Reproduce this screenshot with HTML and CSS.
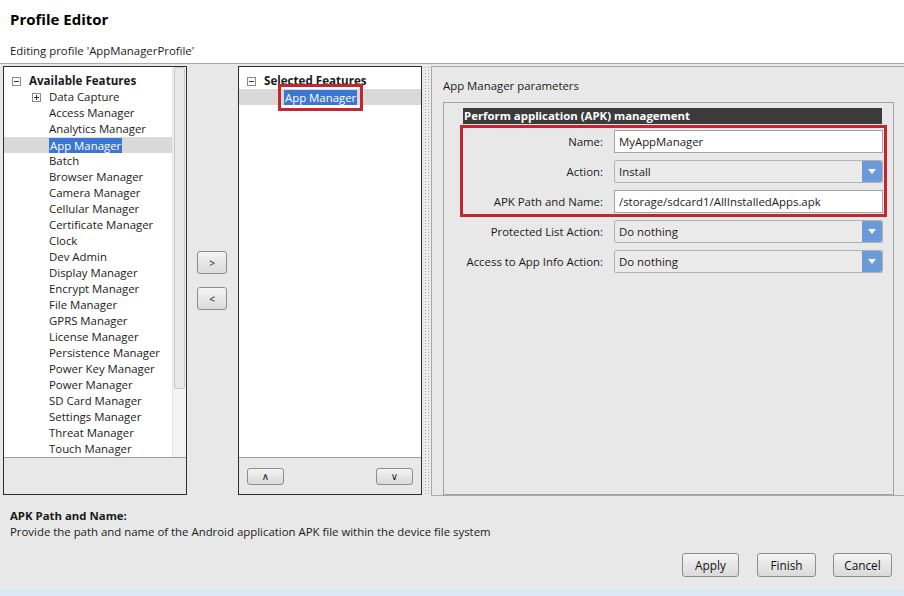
FILE: index.html
```html
<!DOCTYPE html>
<html>
<head>
<meta charset="utf-8">
<title>Profile Editor</title>
<link rel="stylesheet" href="styles.css">
</head>
<body>
<div class="window">
  <header class="header">
    <h1 class="title">Profile Editor</h1>
    <p class="subtitle">Editing profile 'AppManagerProfile'</p>
  </header>

  <div class="main">
    <div class="panel left-panel">
      <div class="tree-area">
        <ul class="tree">
          <li class="row root"><span class="tog minus"></span><b>Available Features</b></li>
          <li class="row l1"><span class="tog plus"></span>Data Capture</li>
          <li class="row l2">Access Manager</li>
          <li class="row l2">Analytics Manager</li>
          <li class="row l2 sel"><span class="hl">App Manager</span></li>
          <li class="row l2">Batch</li>
          <li class="row l2">Browser Manager</li>
          <li class="row l2">Camera Manager</li>
          <li class="row l2">Cellular Manager</li>
          <li class="row l2">Certificate Manager</li>
          <li class="row l2">Clock</li>
          <li class="row l2">Dev Admin</li>
          <li class="row l2">Display Manager</li>
          <li class="row l2">Encrypt Manager</li>
          <li class="row l2">File Manager</li>
          <li class="row l2">GPRS Manager</li>
          <li class="row l2">License Manager</li>
          <li class="row l2">Persistence Manager</li>
          <li class="row l2">Power Key Manager</li>
          <li class="row l2">Power Manager</li>
          <li class="row l2">SD Card Manager</li>
          <li class="row l2">Settings Manager</li>
          <li class="row l2">Threat Manager</li>
          <li class="row l2">Touch Manager</li>
        </ul>
        <div class="vscroll"><div class="thumb"></div></div>
      </div>
      <div class="panel-foot"></div>
    </div>

    <div class="mover">
      <button class="btn move-btn">&gt;</button>
      <button class="btn move-btn">&lt;</button>
    </div>

    <div class="panel mid-panel">
      <div class="tree-area">
        <ul class="tree">
          <li class="row root"><span class="tog minus"></span><b>Selected Features</b></li>
          <li class="row l2s sel"><span class="hl marked">App Manager</span></li>
        </ul>
      </div>
      <div class="panel-foot mid-foot">
        <button class="btn order-btn">&#8743;</button>
        <button class="btn order-btn">&#8744;</button>
      </div>
    </div>

    <div class="sash"><div class="sash-dots"></div></div>

    <div class="params">
      <div class="params-title">App Manager parameters</div>
      <div class="group">
        <div class="group-head">Perform application (APK) management</div>
        <div class="form">
          <div class="callout">
            <div class="frow"><span class="flabel">Name:</span><div class="field text">MyAppManager</div></div>
            <div class="frow"><span class="flabel">Action:</span><div class="field combo"><span>Install</span><span class="drop"></span></div></div>
            <div class="frow"><span class="flabel">APK Path and Name:</span><div class="field text">/storage/sdcard1/AllInstalledApps.apk</div></div>
          </div>
          <div class="frow"><span class="flabel">Protected List Action:</span><div class="field combo"><span>Do nothing</span><span class="drop"></span></div></div>
          <div class="frow"><span class="flabel">Access to App Info Action:</span><div class="field combo"><span>Do nothing</span><span class="drop"></span></div></div>
        </div>
      </div>
    </div>
  </div>

  <div class="footer">
    <div class="help">
      <div class="help-title">APK Path and Name:</div>
      <div class="help-text">Provide the path and name of the Android application APK file within the device file system</div>
    </div>
    <div class="actions">
      <button class="btn act apply">Apply</button>
      <button class="btn act">Finish</button>
      <button class="btn act">Cancel</button>
    </div>
  </div>
  <div class="taskstrip"></div>
</div>
</body>
</html>
```

FILE: styles.css
```css
* { box-sizing: border-box; }
html, body { margin: 0; padding: 0; }
body {
  width: 904px;
  height: 596px;
  overflow: hidden;
  background: #e8e8e8;
  font-family: "Open Sans", "Noto Sans", sans-serif;
  font-size: 11.4px;
  color: #1a1a1a;
}
.window { width: 904px; height: 596px; display: flex; flex-direction: column; overflow: hidden; }

.header {
  flex: none;
  background: #fff;
  height: 64px;
  border-bottom: 1px solid #a9a9a9;
  padding: 8px 10px 0;
}
.title { margin: 0; font-size: 15px; font-weight: 700; line-height: 22px; color: #000; }
.subtitle { margin: 13px 0 0; font-size: 11.4px; line-height: 16px; }

.main {
  flex: none;
  display: flex;
  height: 432px;
  padding: 2px 0 0 3px;
}
.main > * { flex: none; }
.panel {
  border: 1px solid #2e2e2e;
  background: #e8e8e8;
  display: flex;
  flex-direction: column;
  height: 429px;
}
.left-panel { width: 184px; }
.mid-panel { width: 184px; }
.tree-area {
  background: #fff;
  height: 391px;
  border-bottom: 1px solid #9c9c9c;
  display: flex;
}
.tree { list-style: none; margin: 0; padding: 6px 0 0; flex: 1; }
.row { height: 16px; line-height: 16px; white-space: nowrap; display: flex; align-items: center; }
.row b { font-weight: 700; font-size: 11.6px; }
.root { padding-left: 8px; }
.l1 { padding-left: 28px; }
.l2 { padding-left: 45px; }
.l2s { padding-left: 45px; }
.tog {
  width: 9px; height: 9px;
  border: 1px solid #8a8a8a;
  margin-right: 8px;
  position: relative;
  flex: none;
  background: #fff;
}
.tog::before {
  content: ""; position: absolute; left: 1px; right: 1px; top: 3px; height: 1px; background: #333;
}
.tog.plus::after {
  content: ""; position: absolute; top: 1px; bottom: 1px; left: 3px; width: 1px; background: #333;
}
.sel { background: #d9d9d9; }
.hl { background: #3a76d2; color: #fff; padding: 0 1px; line-height: 15px; }
.marked { outline: 3px solid #c3262e; outline-offset: 3px; }

.vscroll {
  flex: none;
  width: 14px;
  background: #f3f3f3;
  border-left: 1px solid #e4e4e4;
  padding: 0 1px;
}
.thumb {
  height: 322px;
  background: #e8e8e8;
  border: 1px solid #c6c6c6;
  border-radius: 2px;
}
.panel-foot { flex: 1; }

.mover {
  width: 51px;
  display: flex;
  flex-direction: column;
  align-items: flex-start;
  padding: 185px 0 0 10px;
  gap: 13px;
}
.btn {
  font-family: inherit;
  font-size: 11.4px;
  color: #111;
  border: 1px solid #8c8c8c;
  border-radius: 3px;
  background: linear-gradient(#f4f4f4, #e6e6e6 50%, #dadada);
  padding: 0;
  cursor: default;
}
.move-btn { width: 30px; height: 23px; font-size: 10px; }

.mid-foot {
  display: flex;
  justify-content: space-between;
  align-items: flex-start;
  padding: 10px 8px 0;
}
.order-btn {
  width: 37px; height: 17px;
  font-family: "DejaVu Sans", sans-serif;
  font-size: 10px;
  line-height: 14px;
}

.sash {
  width: 9px;
  height: 429px;
  display: flex;
  justify-content: center;
}
.sash-dots {
  width: 6px;
  height: 100%;
  background-color: #ededed;
  background-image: radial-gradient(circle, #a3a3a3 0.6px, transparent 1px);
  background-size: 3px 3px;
}

.params {
  width: 480px;
  height: 430px;
  border: 1px solid #a9a9a9;
  display: flex;
  flex-direction: column;
  padding: 0 0 0 11px;
}
.params-title { line-height: 16px; padding-top: 11px; height: 35px; }
.group {
  width: 451px;
  flex: 1;
  border: 1px solid #a3a3a3;
  padding: 5px 0 0 19px;
}
.group-head {
  width: 419px;
  height: 16px;
  line-height: 16px;
  background: #3b3b3b;
  color: #fff;
  font-weight: 700;
  padding-left: 1px;
  font-size: 11.4px;
}
.form { display: flex; flex-direction: column; gap: 7px; padding-top: 6px; width: 420px; }
.callout {
  display: flex; flex-direction: column; gap: 7px;
  margin: -2px -1px -1px 0;
  padding: 2px 1px 1px 0;
  outline: 3px solid #c3262e;
}
.frow {
  display: grid;
  grid-template-columns: 140px 269px;
  column-gap: 11px;
  height: 23px;
  align-items: center;
}
.flabel { text-align: right; white-space: nowrap; }
.field {
  height: 23px;
  line-height: 21px;
  padding-left: 4px;
  white-space: nowrap;
}
.text { background: #fff; border: 1px solid #a4a4a4; }
.combo {
  background: #eaeaea;
  border: 1px solid #b2b2b2;
  border-radius: 2px;
  display: flex;
  justify-content: space-between;
  padding-right: 0;
}
.drop {
  width: 20px;
  height: 21px;
  background: #6b9ad8;
  border-radius: 0 2px 2px 0;
  position: relative;
}
.drop::after {
  content: "";
  position: absolute;
  left: 6px; top: 8px;
  border-left: 4px solid transparent;
  border-right: 4px solid transparent;
  border-top: 5px solid #fff;
}

.footer {
  flex: 1;
  padding: 12px 12px 0 10px;
}
.help-title { font-weight: 700; line-height: 16px; }
.help-text { line-height: 16px; }
.actions {
  display: flex;
  justify-content: flex-end;
  gap: 17px;
  margin-top: 13px;
}
.act { height: 24px; width: 59px; font-size: 11.8px; }
.act.apply { width: 57px; margin-right: 1px; }
.taskstrip { flex: none; height: 7px; background: #dbe7f4; }
```
